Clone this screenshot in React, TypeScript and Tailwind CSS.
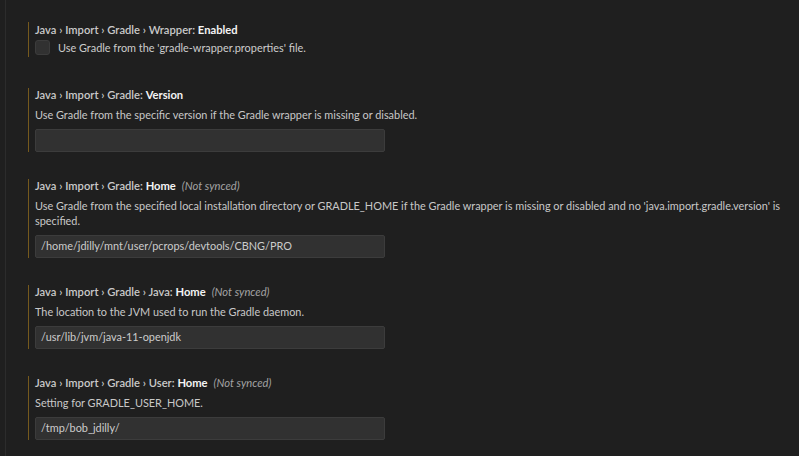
import React from "react";

type Setting = {
  category: string;
  keyName: string;
  notSynced?: boolean;
  description: string;
  value?: string;
  checkbox?: boolean;
};

const settings: Setting[] = [
  {
    category: "Java › Import › Gradle › Wrapper: ",
    keyName: "Enabled",
    description: "Use Gradle from the 'gradle-wrapper.properties' file.",
    checkbox: true,
  },
  {
    category: "Java › Import › Gradle: ",
    keyName: "Version",
    description: "Use Gradle from the specific version if the Gradle wrapper is missing or disabled.",
    value: "",
  },
  {
    category: "Java › Import › Gradle: ",
    keyName: "Home",
    notSynced: true,
    description:
      "Use Gradle from the specified local installation directory or GRADLE_HOME if the Gradle wrapper is missing or disabled and no 'java.import.gradle.version' is specified.",
    value: "/home/jdilly/mnt/user/pcrops/devtools/CBNG/PRO",
  },
  {
    category: "Java › Import › Gradle › Java: ",
    keyName: "Home",
    notSynced: true,
    description: "The location to the JVM used to run the Gradle daemon.",
    value: "/usr/lib/jvm/java-11-openjdk",
  },
  {
    category: "Java › Import › Gradle › User: ",
    keyName: "Home",
    notSynced: true,
    description: "Setting for GRADLE_USER_HOME.",
    value: "/tmp/bob_jdilly/",
  },
];

const SettingTitle: React.FC<{ s: Setting }> = ({ s }) => (
  <div className="h-[14px] leading-[14px] whitespace-nowrap text-[11.2px]">
    <span className="font-semibold text-[#cacaca]">{s.category}</span>
    <span className="font-bold text-[#f4f4f4]">{s.keyName}</span>
    {s.notSynced && <span className="ml-[6px] italic font-normal text-[#a3a3a3]">(Not synced)</span>}
  </div>
);

export default function App() {
  return (
    <div
      className="w-[799px] h-[456px] bg-[#1f1f1f] flex overflow-hidden text-[10.9px]"
      style={{ fontFamily: "Lato, 'Noto Sans', sans-serif" }}
    >
      {/* tree gutter line */}
      <div className="w-[5px] shrink-0" />
      <div className="w-px h-full bg-[#2c2c2c] shrink-0" />

      <div className="flex-1 pl-[22px] pr-[10px] pt-[22px] flex flex-col">
        {settings.map((s, i) => (
          <div
            key={i}
            className={`border-l border-[#75591d] pl-[6px] ${
              i === 0 ? "mb-[31px] pt-[1px] pb-[2px]" : "mb-[27px]"
            }`}
          >
            <SettingTitle s={s} />
            {s.checkbox ? (
              <div className="flex items-center mt-[3px] gap-[8px]">
                <div className="w-[15px] h-[15px] rounded-[3px] bg-[#313131] border border-[#3c3c3c]" />
                <span className="text-[#cccccc] leading-[15px]">{s.description}</span>
              </div>
            ) : (
              <>
                <div className="mt-[5px] leading-[15px] text-[#c8c8c8] max-w-[760px]">{s.description}</div>
                <div className="mt-[7px] w-[350px] h-[23px] bg-[#313131] border border-[#3c3c3c] rounded-[2px] flex items-center px-[5px] text-[#cccccc]">
                  {s.value}
                </div>
              </>
            )}
          </div>
        ))}
      </div>
    </div>
  );
}
